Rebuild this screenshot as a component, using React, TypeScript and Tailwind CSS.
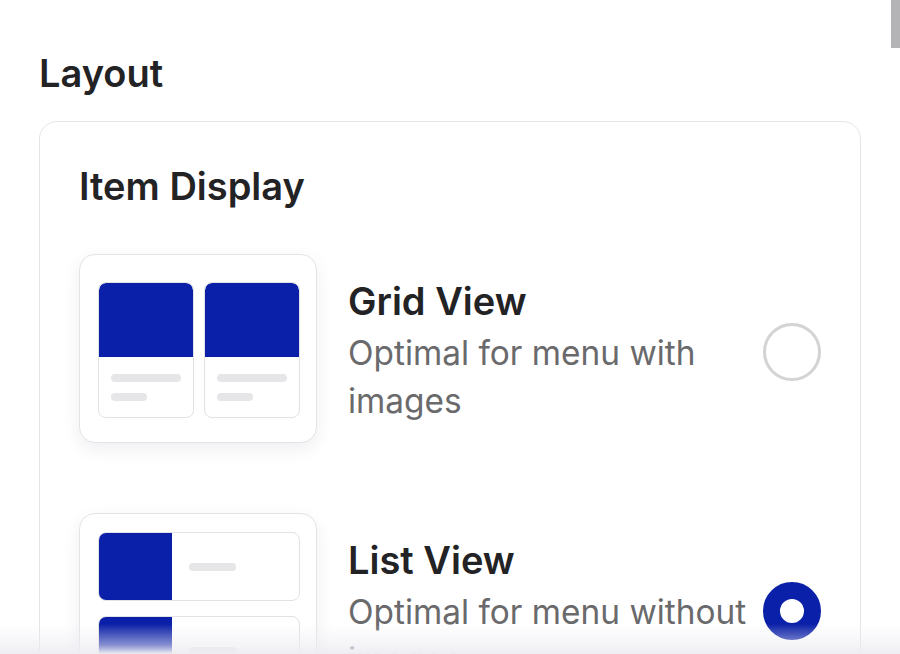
import React from "react";

const BLUE = "bg-[#0b20a8]";

function GridPreview() {
  return (
    <div className="w-[238px] h-[189px] shrink-0 rounded-[16px] border-[1.5px] border-[#e4e4e6] bg-white shadow-[0_6px_18px_rgba(20,20,60,0.07)] pl-[18px] pt-[27px] flex gap-[10px]">
      {[0, 1].map((i) => (
        <div key={i} className="w-[96px] h-[136px] rounded-[8px] border-[1.5px] border-[#e2e2e4] overflow-hidden flex flex-col">
          <div className={`h-[74px] ${BLUE} rounded-t-[7px]`} />
          <div className="px-[12px] pt-[17px] flex flex-col gap-[11px]">
            <div className="h-[8px] w-[70px] rounded-full bg-[#e6e6e8]" />
            <div className="h-[8px] w-[36px] rounded-full bg-[#e6e6e8]" />
          </div>
        </div>
      ))}
    </div>
  );
}

function ListPreview() {
  return (
    <div className="w-[238px] h-[189px] shrink-0 rounded-[16px] border-[1.5px] border-[#e4e4e6] bg-white shadow-[0_6px_18px_rgba(20,20,60,0.07)] pl-[18px] pt-[18px] flex flex-col gap-[15px]">
      {[0, 1].map((i) => (
        <div key={i} className="w-[202px] h-[69px] rounded-[8px] border-[1.5px] border-[#e2e2e4] overflow-hidden flex">
          <div className={`w-[73px] h-full ${BLUE}`} />
          <div className="flex-1 flex items-center pl-[17px]">
            <div className="h-[8px] w-[47px] rounded-full bg-[#e6e6e8]" />
          </div>
        </div>
      ))}
    </div>
  );
}

function Option({
  title,
  desc,
  selected,
  preview,
}: {
  title: string;
  desc: string;
  selected: boolean;
  preview: React.ReactNode;
}) {
  return (
    <div className="flex items-center">
      {preview}
      <div className="ml-[31px] w-[410px] flex flex-col pt-[6px]">
        <div className="text-[38px] leading-[46px] font-semibold text-[#232325]">{title}</div>
        <div className="text-[33.4px] leading-[48px] text-[#6a6a6c] mt-[5px]">{desc}</div>
      </div>
      <div className="ml-auto mt-[7px]">
        {selected ? (
          <div className="w-[58px] h-[58px] rounded-full border-[17px] border-[#0b20a8] bg-white" />
        ) : (
          <div className="w-[58px] h-[58px] rounded-full border-[3px] border-[#d3d3d5] bg-white" />
        )}
      </div>
    </div>
  );
}

export default function App() {
  return (
    <div
      className="relative w-[900px] h-[654px] overflow-hidden bg-white"
      style={{ fontFamily: "Inter, 'Noto Sans', sans-serif" }}
    >
      <div className="px-[39px] pt-[50px]">
        <h1 className="text-[38px] leading-[46px] font-semibold text-[#232325]">Layout</h1>
        <div className="mt-[25px] w-[822px] rounded-[18px] border-[1.5px] border-[#e4e4e6] px-[39px] pt-[39px] pb-[40px]">
          <h2 className="text-[38px] leading-[50px] font-semibold text-[#232325]">Item Display</h2>
          <div className="mt-[43px] flex flex-col gap-[70px]">
            <Option title="Grid View" desc="Optimal for menu with images" selected={false} preview={<GridPreview />} />
            <Option title="List View" desc="Optimal for menu without images" selected={true} preview={<ListPreview />} />
          </div>
        </div>
      </div>
      <div className="absolute right-0 top-0 w-[9px] h-[48px] bg-[#b4b4b6]" />
      <div className="absolute left-0 right-0 bottom-0 h-[30px] bg-gradient-to-b from-[rgba(236,236,242,0)] via-[rgba(236,236,242,0.55)] via-70% to-[#eeeef2]" />
    </div>
  );
}
